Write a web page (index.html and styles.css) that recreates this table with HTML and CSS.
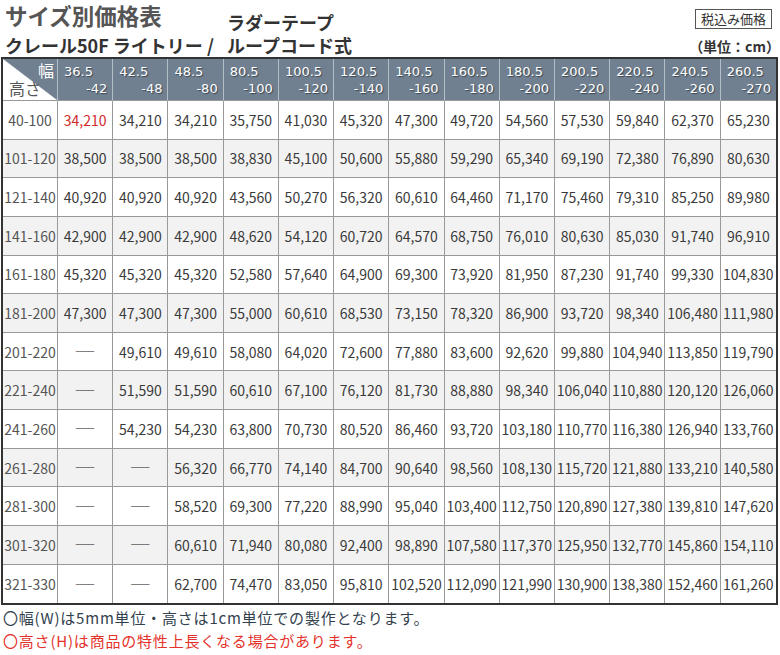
FILE: index.html
```html
<!DOCTYPE html>
<html lang="ja">
<head>
<meta charset="utf-8">
<title>サイズ別価格表</title>
<link rel="stylesheet" href="styles.css">
</head>
<body>
<header class="top">
  <div class="titles">
    <h1 class="title">サイズ別価格表</h1>
    <p class="sub">クレール50F ライトリー / </p>
  </div>
  <div class="type"><span>ラダーテープ</span><span>ループコード式</span></div>
  <div class="right">
    <span class="tax">税込み価格</span>
    <span class="unit">（単位：cm）</span>
  </div>
</header>
<table class="price">
  <thead>
    <tr class="hrow">
      <th class="diag"><span class="w">幅</span><span class="h">高さ</span></th>
      <th><span class="a">36.5</span><span class="b">-42</span></th>
      <th><span class="a">42.5</span><span class="b">-48</span></th>
      <th><span class="a">48.5</span><span class="b">-80</span></th>
      <th><span class="a">80.5</span><span class="b">-100</span></th>
      <th><span class="a">100.5</span><span class="b">-120</span></th>
      <th><span class="a">120.5</span><span class="b">-140</span></th>
      <th><span class="a">140.5</span><span class="b">-160</span></th>
      <th><span class="a">160.5</span><span class="b">-180</span></th>
      <th><span class="a">180.5</span><span class="b">-200</span></th>
      <th><span class="a">200.5</span><span class="b">-220</span></th>
      <th><span class="a">220.5</span><span class="b">-240</span></th>
      <th><span class="a">240.5</span><span class="b">-260</span></th>
      <th><span class="a">260.5</span><span class="b">-270</span></th>
    </tr>
  </thead>
  <tbody>
    <tr><td class="hd">40-100</td><td class="red">34,210</td><td>34,210</td><td>34,210</td><td>35,750</td><td>41,030</td><td>45,320</td><td>47,300</td><td>49,720</td><td>54,560</td><td>57,530</td><td>59,840</td><td>62,370</td><td>65,230</td></tr>
    <tr><td class="hd">101-120</td><td>38,500</td><td>38,500</td><td>38,500</td><td>38,830</td><td>45,100</td><td>50,600</td><td>55,880</td><td>59,290</td><td>65,340</td><td>69,190</td><td>72,380</td><td>76,890</td><td>80,630</td></tr>
    <tr><td class="hd">121-140</td><td>40,920</td><td>40,920</td><td>40,920</td><td>43,560</td><td>50,270</td><td>56,320</td><td>60,610</td><td>64,460</td><td>71,170</td><td>75,460</td><td>79,310</td><td>85,250</td><td>89,980</td></tr>
    <tr><td class="hd">141-160</td><td>42,900</td><td>42,900</td><td>42,900</td><td>48,620</td><td>54,120</td><td>60,720</td><td>64,570</td><td>68,750</td><td>76,010</td><td>80,630</td><td>85,030</td><td>91,740</td><td>96,910</td></tr>
    <tr><td class="hd">161-180</td><td>45,320</td><td>45,320</td><td>45,320</td><td>52,580</td><td>57,640</td><td>64,900</td><td>69,300</td><td>73,920</td><td>81,950</td><td>87,230</td><td>91,740</td><td>99,330</td><td>104,830</td></tr>
    <tr><td class="hd">181-200</td><td>47,300</td><td>47,300</td><td>47,300</td><td>55,000</td><td>60,610</td><td>68,530</td><td>73,150</td><td>78,320</td><td>86,900</td><td>93,720</td><td>98,340</td><td>106,480</td><td>111,980</td></tr>
    <tr><td class="hd">201-220</td><td class="na">――</td><td>49,610</td><td>49,610</td><td>58,080</td><td>64,020</td><td>72,600</td><td>77,880</td><td>83,600</td><td>92,620</td><td>99,880</td><td>104,940</td><td>113,850</td><td>119,790</td></tr>
    <tr><td class="hd">221-240</td><td class="na">――</td><td>51,590</td><td>51,590</td><td>60,610</td><td>67,100</td><td>76,120</td><td>81,730</td><td>88,880</td><td>98,340</td><td>106,040</td><td>110,880</td><td>120,120</td><td>126,060</td></tr>
    <tr><td class="hd">241-260</td><td class="na">――</td><td>54,230</td><td>54,230</td><td>63,800</td><td>70,730</td><td>80,520</td><td>86,460</td><td>93,720</td><td>103,180</td><td>110,770</td><td>116,380</td><td>126,940</td><td>133,760</td></tr>
    <tr><td class="hd">261-280</td><td class="na">――</td><td class="na">――</td><td>56,320</td><td>66,770</td><td>74,140</td><td>84,700</td><td>90,640</td><td>98,560</td><td>108,130</td><td>115,720</td><td>121,880</td><td>133,210</td><td>140,580</td></tr>
    <tr><td class="hd">281-300</td><td class="na">――</td><td class="na">――</td><td>58,520</td><td>69,300</td><td>77,220</td><td>88,990</td><td>95,040</td><td>103,400</td><td>112,750</td><td>120,890</td><td>127,380</td><td>139,810</td><td>147,620</td></tr>
    <tr><td class="hd">301-320</td><td class="na">――</td><td class="na">――</td><td>60,610</td><td>71,940</td><td>80,080</td><td>92,400</td><td>98,890</td><td>107,580</td><td>117,370</td><td>125,950</td><td>132,770</td><td>145,860</td><td>154,110</td></tr>
    <tr><td class="hd">321-330</td><td class="na">――</td><td class="na">――</td><td>62,700</td><td>74,470</td><td>83,050</td><td>95,810</td><td>102,520</td><td>112,090</td><td>121,990</td><td>130,900</td><td>138,380</td><td>152,460</td><td>161,260</td></tr>
  </tbody>
</table>
<div class="notes">
  <p class="note">〇幅(W)は5mm単位・高さは1cm単位での製作となります。</p>
  <p class="note warn">〇高さ(H)は商品の特性上長くなる場合があります。</p>
</div>
</body>
</html>
```
FILE: styles.css
```css
* { box-sizing: border-box; }
html, body { margin: 0; padding: 0; background: #fff; }
body {
  width: 780px;
  font-family: "Noto Sans CJK JP", "Noto Sans", sans-serif;
  color: #333;
}
.top {
  display: flex;
  height: 57px;
  padding-left: 5px;
}
.titles { display: flex; flex-direction: column; }
.title {
  margin: 0;
  font-size: 22.5px;
  line-height: 30px;
  font-weight: bold;
  color: #555;
}
.sub {
  margin: 4px 0 0;
  font-size: 18px;
  line-height: 23px;
  font-weight: bold;
  color: #333;
  white-space: pre;
}
.type {
  display: flex;
  flex-direction: column;
  align-self: flex-end;
  margin-left: 9px;
  font-size: 18px;
  line-height: 23px;
  font-weight: bold;
  color: #333;
}
.right {
  margin-left: auto;
  display: flex;
  flex-direction: column;
  align-items: flex-end;
  padding-top: 9px;
}
.tax {
  margin-right: 8px;
  border: 1px solid #555;
  padding: 0 5px;
  font-size: 13px;
  line-height: 18px;
  color: #333;
}
.unit {
  margin-top: 6px;
  font-size: 14px;
  line-height: 23px;
  font-weight: bold;
  color: #333;
}
.price {
  margin-left: 1px;
  width: 777px;
  table-layout: fixed;
  border-collapse: separate;
  border-spacing: 0;
  border: 2px solid #333;
}
.price th, .price td {
  padding: 0;
  border-right: 1px solid #999;
  border-bottom: 1px solid #999;
}
.price th:last-child, .price td:last-child { border-right: none; }
.price tbody tr:last-child td { border-bottom: none; }
.hrow { height: 42px; }
.hrow th {
  background: #708090;
  border-right-color: #b4bec6;
  color: #fff;
  font-family: "DejaVu Sans", sans-serif;
  font-weight: normal;
  font-size: 13px;
  line-height: 17px;
  text-shadow: 1px 1px 1px #3a4550;
  padding: 0 5px 0 6px;
  vertical-align: middle;
}
.hrow th:first-child { width: 55px; }
.a, .b { display: block; }
.a { text-align: left; }
.b { text-align: right; }
.hrow th.diag {
  background: linear-gradient(to top right, #fff calc(50% - 0.6px), #708090 calc(50% + 0.6px));
  font-family: "Noto Sans CJK JP", sans-serif;
  font-size: 16px;
  line-height: 18px;
  padding: 1px 3px 2px 6px;
  text-shadow: none;
}
.diag .w { display: block; text-align: right; color: #fff; }
.diag .h { display: block; text-align: left; color: #555; }
.price tbody tr { height: 38.65px; }
.price tbody tr:nth-child(even) td { background: #f2f2f2; }
.price td {
  text-align: center;
  font-size: 14px;
  color: #3a3a3a;
  vertical-align: middle;
}
.price td.hd { color: #555; }
.price td.red { color: #d32a2a; }
.price td.na { font-size: 10px; color: #111; }
.notes { padding-left: 3px; margin-top: 1px; }
.note {
  margin: 0;
  font-size: 15px;
  line-height: 23px;
  letter-spacing: 0.8px;
  color: #33414e;
}
.note.warn { color: #e4322b; }
```
